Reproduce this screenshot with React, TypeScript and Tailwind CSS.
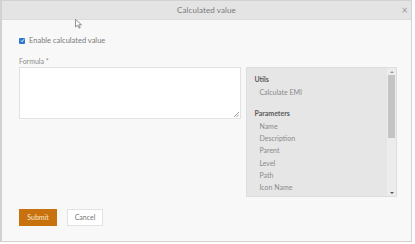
import React from "react";

const items = ["Name", "Description", "Parent", "Level", "Path", "Icon Name"];

export default function App() {
  return (
    <div className="w-[415px] h-[244px] bg-white relative" style={{ fontFamily: "Lato, 'Open Sans', sans-serif" }}>
      <div className="w-[412px] h-[242px] border border-[#d2d2d2] border-l-2 bg-[#f8f8f8] flex flex-col">
        <div className="h-[19px] bg-[#e4e4e4] border-b border-[#dcdcdc] relative flex items-center justify-center">
          <span className="text-[8px] text-[#7a7a7a] tracking-[0.1px]">Calculated value</span>
          <span className="absolute right-[3px] top-[3px] text-[11px] leading-[11px] text-[#a0a0a0]">×</span>
        </div>
        <div className="pl-[17px] pr-[14px] flex flex-col">
          <div className="flex items-center mt-[17px] h-[7px]">
            <div className="w-[6px] h-[6px] bg-[#2f74d0] rounded-[1px] flex items-center justify-center">
              <svg width="5" height="5" viewBox="0 0 10 10">
                <path d="M2 5 L4 7.5 L8 2.5" stroke="white" strokeWidth="1.8" fill="none" />
              </svg>
            </div>
            <span className="ml-[4px] text-[7.5px] text-[#7a7a7a]">Enable calculated value</span>
          </div>
          <div className="mt-[13px] text-[7px] leading-[9px] text-[#8a8a8a]">Formula *</div>
          <div className="flex mt-[1px]">
            <div className="w-[223px] h-[52px] bg-white border border-[#e2e2e2] relative">
              <svg className="absolute right-[1px] bottom-[1px]" width="5" height="5" viewBox="0 0 5 5">
                <path d="M5 0 L0 5 M5 2.5 L2.5 5" stroke="#888" strokeWidth="0.8" />
              </svg>
            </div>
            <div className="ml-[5px] w-[151px] h-[130px] bg-[#e6e6e6] border border-[#dedede] flex">
              <div className="flex-1 pl-[7px] pt-[5px] text-[7px] leading-[12.3px] text-[#8a8a8a]">
                <div className="font-bold text-[#5a5a5a]">Utils</div>
                <div className="pl-[5px] mt-[1px]">Calculate EMI</div>
                <div className="font-bold text-[#5a5a5a] mt-[8px]">Parameters</div>
                <div className="pl-[5px] mt-[1px]">
                  {items.map((t) => (
                    <div key={t}>{t}</div>
                  ))}
                </div>
              </div>
              <div className="w-[9px] bg-[#ececec] flex flex-col items-center">
                <div className="h-[7px] flex items-center justify-center">
                  <div className="w-0 h-0 border-l-[2px] border-r-[2px] border-b-[2px] border-l-transparent border-r-transparent border-b-[#999]" />
                </div>
                <div className="w-[7px] h-[63px] bg-[#c4c4c4]" />
                <div className="flex-1" />
                <div className="h-[7px] flex items-center justify-center">
                  <div className="w-0 h-0 border-l-[2px] border-r-[2px] border-t-[2px] border-l-transparent border-r-transparent border-t-[#555]" />
                </div>
              </div>
            </div>
          </div>
          <div className="flex mt-[12px]">
            <div className="w-[38px] h-[17px] bg-[#c8720f] flex items-center justify-center text-[7px] text-[#fbe6cc]">Submit</div>
            <div className="ml-[10px] w-[36px] h-[17px] bg-white border border-[#e2e2e2] flex items-center justify-center text-[7px] text-[#777]">Cancel</div>
          </div>
        </div>
      </div>
      <svg className="absolute left-[75px] top-[19px]" width="8" height="10" viewBox="0 0 8 10">
        <path d="M0.5 0.5 L0.5 8 L2.5 6.2 L4 9.2 L5.2 8.6 L3.8 5.8 L6.5 5.8 Z" fill="white" stroke="#666" strokeWidth="0.7" />
      </svg>
    </div>
  );
}
